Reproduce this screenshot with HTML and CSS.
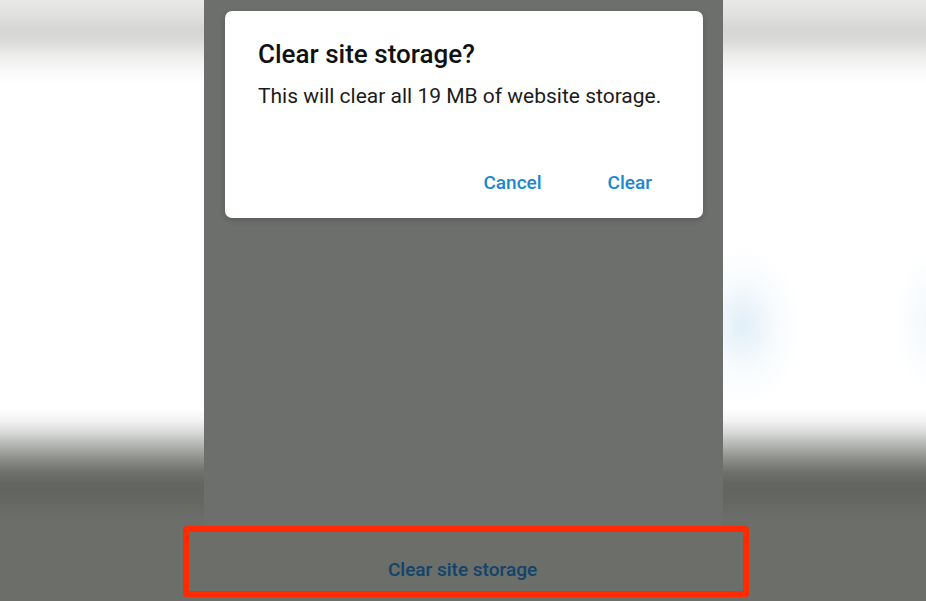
FILE: index.html
```html
<!DOCTYPE html>
<html lang="en">
<head>
<meta charset="utf-8">
<title>Clear site storage</title>
<link rel="stylesheet" href="styles.css">
</head>
<body>
<div class="screen">
  <div class="top">
    <div class="side side-left"></div>
    <div class="panel">
      <div class="dialog">
        <h1 class="dialog-title">Clear site storage?</h1>
        <p class="dialog-body">This will clear all 19 MB of website storage.</p>
        <div class="dialog-actions">
          <button class="btn">Cancel</button>
          <button class="btn">Clear</button>
        </div>
      </div>
    </div>
    <div class="side side-right"></div>
  </div>
  <div class="bottom">
    <div class="bottom-label">Clear site storage</div>
  </div>
  <div class="highlight"></div>
</div>
</body>
</html>
```

FILE: styles.css
```css
* { box-sizing: border-box; }
html, body {
  margin: 0;
  padding: 0;
  width: 926px;
  height: 601px;
  overflow: hidden;
  font-family: Roboto, "Liberation Sans", sans-serif;
  background: #6b6e69;
}
.screen {
  position: relative;
  width: 926px;
  height: 601px;
  display: flex;
  flex-direction: column;
}
.top {
  display: flex;
  height: 533px;
}
.side {
  flex: 1;
  background: linear-gradient(to bottom,
    #e9e9e8 0px,
    #dfdfde 18px,
    #d5d6d4 30px,
    #dcdcdb 42px,
    #ededec 56px,
    #f9f9f9 70px,
    #ffffff 85px,
    #ffffff 408px,
    #f4f4f4 420px,
    #dadbda 432px,
    #b4b6b3 445px,
    #8e918c 458px,
    #6e716c 472px,
    #61645f 485px,
    #646762 500px,
    #6a6d68 520px,
    #6b6e69 533px);
}
.side-left { width: 204px; flex: 0 0 204px; }
.side-right {
  background:
    radial-gradient(ellipse 60px 80px at 20px 325px, rgba(205,228,242,0.6), rgba(225,238,246,0.25) 55%, rgba(255,255,255,0) 100%),
    radial-gradient(ellipse 40px 70px at 210px 322px, rgba(225,238,246,0.45), rgba(255,255,255,0) 100%),
    linear-gradient(to bottom,
    #e9e9e8 0px,
    #dfdfde 18px,
    #d5d6d4 30px,
    #dcdcdb 42px,
    #ededec 56px,
    #f9f9f9 70px,
    #ffffff 85px,
    #ffffff 408px,
    #f4f4f4 420px,
    #dadbda 432px,
    #b4b6b3 445px,
    #8e918c 458px,
    #6e716c 472px,
    #61645f 485px,
    #646762 500px,
    #6a6d68 520px,
    #6b6e69 533px);
}
.panel {
  flex: 0 0 519px;
  width: 519px;
  background: #6c6f6c;
  padding: 11px 20px 0 21px;
}
.dialog {
  background: #ffffff;
  border-radius: 7px;
  height: 207px;
  padding: 27px 32px 0 33px;
  box-shadow: 0 2px 6px rgba(0,0,0,0.18);
  display: flex;
  flex-direction: column;
}
.dialog-title {
  margin: 0;
  font-size: 26px;
  font-weight: 500;
  line-height: 32px;
  color: #111111;
}
.dialog-body {
  margin: 14px 0 0;
  font-size: 21px;
  font-weight: 400;
  line-height: 24px;
  color: #1b1b1b;
}
.dialog-actions {
  display: flex;
  justify-content: flex-end;
  gap: 66px;
  margin-top: 63px;
  padding-right: 19px;
}
.btn {
  border: 0;
  background: none;
  padding: 0;
  font-family: Roboto, "Liberation Sans", sans-serif;
  font-size: 19px;
  font-weight: 500;
  line-height: 24px;
  color: #1b87cf;
  cursor: pointer;
}
.bottom {
  flex: 1;
  display: flex;
  justify-content: center;
  align-items: flex-start;
  padding-top: 25px;
}
.bottom-label {
  width: 519px;
  margin-left: -1px;
  text-align: center;
  font-size: 19px;
  font-weight: 500;
  line-height: 24px;
  color: #12436a;
}
.highlight {
  position: absolute;
  left: 183px;
  top: 526px;
  width: 566px;
  height: 71px;
  border: 6px solid #ff2a00;
  border-radius: 4px;
}
```
